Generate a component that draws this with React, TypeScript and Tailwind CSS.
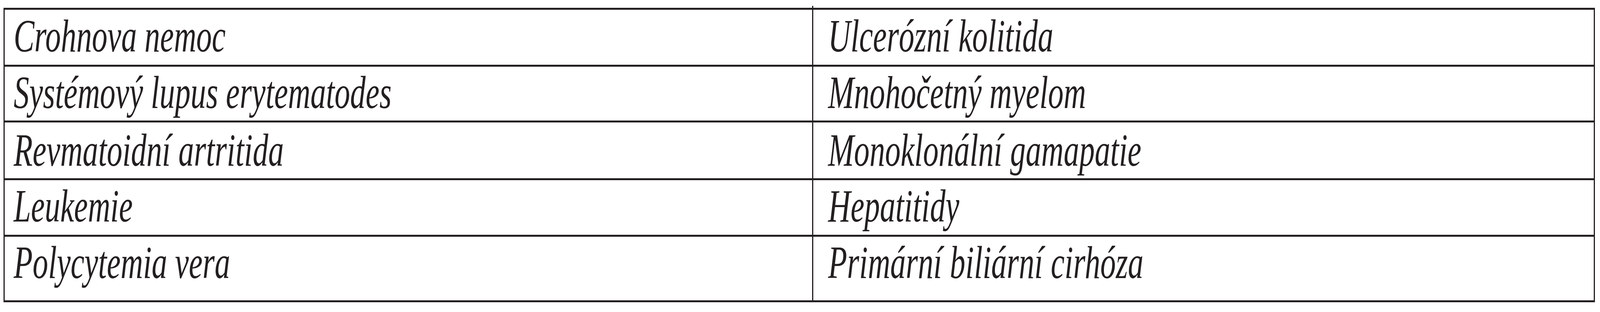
import React from "react";

const rows: { left: string; right: string; h: string; pt: string }[] = [
  { left: "Crohnova nemoc", right: "Ulcerózní kolitida", h: "h-[141px]", pt: "pt-[9px]" },
  { left: "Systémový lupus erytematodes", right: "Mnohočetný myelom", h: "h-[138px]", pt: "pt-[8px]" },
  { left: "Revmatoidní artritida", right: "Monoklonální gamapatie", h: "h-[143px]", pt: "pt-[13px]" },
  { left: "Leukemie", right: "Hepatitidy", h: "h-[140px]", pt: "pt-[8px]" },
  { left: "Polycytemia vera", right: "Primární biliární cirhóza", h: "h-[163px]", pt: "pt-[8px]" },
];

function Cell({ text, pl, pt, grow }: { text: string; pl: string; pt: string; grow?: boolean }) {
  return (
    <div className={`${grow ? "flex-1" : "w-[2066.3px] shrink-0"} bg-white ${pl} ${pt} overflow-hidden`}>
      <span className="inline-block origin-left scale-x-[0.674] whitespace-nowrap text-[118px] leading-none italic text-[#231f20] font-['Liberation_Serif',serif]">
        {text}
      </span>
    </div>
  );
}

export default function App() {
  return (
    <div className="w-[4096px] h-[800px] bg-white pt-[15px] pl-[9.16px]">
      <div className="w-[4073.7px]">
        <div className="flex h-[5px]">
          <div className="w-[2069.6px]" />
          <div className="w-[3.27px] bg-[#231f20]" />
        </div>
        <div className="bg-[#231f20] px-[3.27px] py-[5px] flex flex-col gap-[5px]">
          {rows.map((r, i) => (
            <div key={i} className={`flex gap-[3.27px] ${r.h}`}>
              <Cell text={r.left} pl="pl-[22.25px]" pt={r.pt} />
              <Cell text={r.right} pl="pl-[37.96px]" pt={r.pt} grow />
            </div>
          ))}
        </div>
      </div>
    </div>
  );
}
